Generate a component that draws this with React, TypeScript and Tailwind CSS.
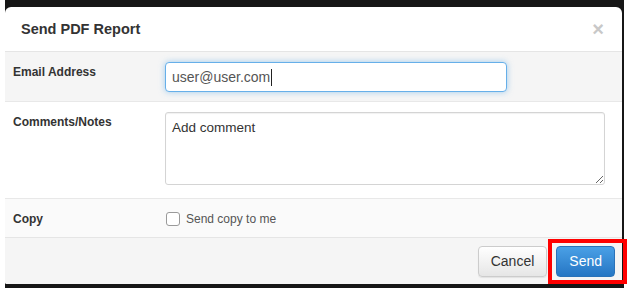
export default function App() {
  return (
    <div className="relative w-[640px] h-[302px] bg-white font-['Liberation_Sans',Arial,sans-serif] text-[#333]">
      {/* dark backdrop around the modal */}
      <div className="ml-[5px] w-[619px] bg-[#161616] pt-[7px] pr-[2px] pb-[4px]">
        <div className="bg-white rounded-t-[6px] rounded-b-[2px] overflow-hidden">
          {/* header */}
          <div className="h-[45px] border-b border-[#e5e5e5] flex items-center justify-between pl-[16px] pr-[18px]">
            <h4 className="text-[14.5px] font-bold text-[#333] leading-none">Send PDF Report</h4>
            <span className="text-[20px] font-bold leading-none text-[#c8c8c8]">×</span>
          </div>

          {/* email */}
          <div className="h-[50px] border-b border-[#e8e8e8] bg-[#f5f5f5] flex">
            <div className="w-[160px] pl-[8px] pt-[13px] text-[12px] font-bold leading-[14px]">Email Address</div>
            <div className="pt-[10px]">
              <div className="w-[342px] h-[30px] rounded-[4px] border border-[#66afe9] bg-white shadow-[0_0_6px_rgba(102,175,233,0.6)] flex items-center pl-[6px] text-[14px] text-[#555]">
                user@user.com
                <span className="ml-px w-px h-[17px] bg-[#222]" />
              </div>
            </div>
          </div>

          {/* comments */}
          <div className="h-[97px] border-b border-[#e8e8e8] bg-white flex">
            <div className="w-[160px] pl-[8px] pt-[13px] text-[12px] font-bold leading-[14px]">Comments/Notes</div>
            <div className="pt-[10px]">
              <textarea
                defaultValue="Add comment"
                className="block w-[440px] h-[73px] rounded-[3px] border border-[#d4d4d4] bg-white px-[6px] pt-[7px] text-[13.5px] leading-[16px] text-[#333] outline-none shadow-[inset_0_1px_1px_rgba(0,0,0,0.06)] font-['Liberation_Sans',Arial,sans-serif]"
              />
            </div>
          </div>

          {/* copy */}
          <div className="h-[39px] border-b border-[#e5e5e5] bg-[#fafafa] flex">
            <div className="w-[160px] pl-[8px] pt-[13px] text-[12px] font-bold leading-[14px]">Copy</div>
            <div className="pt-[13px] flex items-start gap-[6px] pl-px">
              <div className="w-[14px] h-[14px] rounded-[3px] border border-[#9a9a9a] bg-white" />
              <span className="text-[12px] leading-[14px] text-[#555]">Send copy to me</span>
            </div>
          </div>

          {/* footer */}
          <div className="h-[46px] bg-[#f5f5f5] flex items-center justify-end gap-[9px] pr-[7px]">
            <button
              type="button"
              className="h-[31px] px-[12px] rounded-[4px] border border-[#ccc] bg-linear-to-b from-white to-[#e6e6e6] text-[14px] text-[#333] shadow-[0_1px_1px_rgba(0,0,0,0.08)]"
            >
              Cancel
            </button>
            <button
              type="button"
              className="h-[31px] px-[12px] rounded-[4px] border border-[#2a72b8] bg-linear-to-b from-[#4aa0e6] to-[#2576c4] text-[14px] text-white"
            >
              Send
            </button>
          </div>
        </div>
      </div>

      {/* highlight box */}
      <div className="absolute left-[548px] top-[239px] w-[79px] h-[45px] border-[4px] border-[#f00]" />
    </div>
  );
}
